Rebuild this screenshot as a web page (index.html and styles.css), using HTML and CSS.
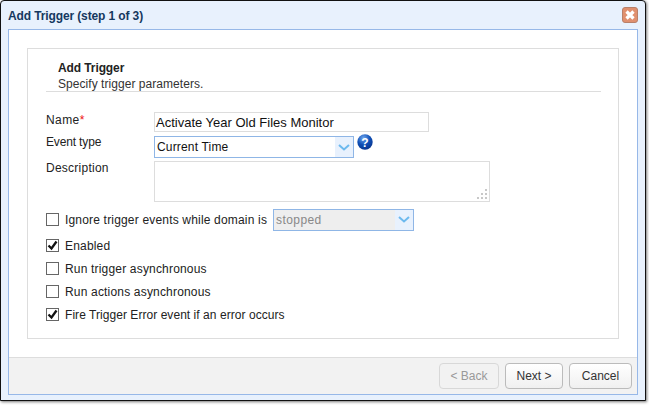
FILE: index.html
```html
<!DOCTYPE html>
<html lang="en">
<head>
<meta charset="utf-8">
<title>Add Trigger</title>
<link rel="stylesheet" href="styles.css">
</head>
<body>
<div class="window">
  <div class="titlebar">
    <span class="title">Add Trigger (step 1 of 3)</span>
    <span class="close"><svg width="12" height="12" viewBox="0 0 12 12"><path d="M2.5 2.5l7 7M9.5 2.5l-7 7" stroke="#fff" stroke-width="3.2"/></svg></span>
  </div>
  <div class="inner">
    <div class="content">
      <div class="panel">
        <div class="head">
          <div class="head-title">Add Trigger</div>
          <div class="head-sub">Specify trigger parameters.</div>
        </div>
        <div class="form-row row-name">
          <label class="label">Name<span class="req">*</span></label>
          <div class="input name-input">Activate Year Old Files Monitor</div>
        </div>
        <div class="form-row row-event">
          <label class="label">Event type</label>
          <div class="select event-select"><span class="select-text">Current Time</span><span class="arrow"><svg width="12" height="7" viewBox="0 0 12 7"><path d="M1 1l5 4.5L11 1" fill="none" stroke="#6cb9ee" stroke-width="2"/></svg></span></div>
          <svg class="help" width="16" height="16" viewBox="0 0 16 16"><defs><radialGradient id="g" cx="0.4" cy="0.25" r="0.85"><stop offset="0" stop-color="#6ea6ee"/><stop offset="0.5" stop-color="#0f4fb5"/><stop offset="1" stop-color="#062f86"/></radialGradient></defs><circle cx="8" cy="8" r="7.7" fill="url(#g)"/><text x="8" y="12.5" text-anchor="middle" class="help-q">?</text></svg>
        </div>
        <div class="form-row row-desc">
          <label class="label">Description</label>
          <div class="textarea"><svg class="grip" width="12" height="12" viewBox="0 0 12 12"><path d="M9 1h2v2H9zM5 5h2v2H5zM9 5h2v2H9zM1 9h2v2H1zM5 9h2v2H5zM9 9h2v2H9z" fill="#c8c8c8"/></svg></div>
        </div>
        <div class="check-row row-ignore">
          <span class="check"></span><span class="check-label">Ignore trigger events while domain is</span>
          <div class="select state-select"><span class="select-text">stopped</span><span class="arrow"><svg width="12" height="7" viewBox="0 0 12 7"><path d="M1 1l5 4.5L11 1" fill="none" stroke="#6cb9ee" stroke-width="2"/></svg></span></div>
        </div>
        <div class="check-row"><span class="check"><svg width="11" height="11" viewBox="0 0 11 11"><path d="M1.5 5.5l3 3 5-7" fill="none" stroke="#111" stroke-width="2.3"/></svg></span><span class="check-label">Enabled</span></div>
        <div class="check-row"><span class="check"></span><span class="check-label">Run trigger asynchronous</span></div>
        <div class="check-row"><span class="check"></span><span class="check-label">Run actions asynchronous</span></div>
        <div class="check-row"><span class="check"><svg width="11" height="11" viewBox="0 0 11 11"><path d="M1.5 5.5l3 3 5-7" fill="none" stroke="#111" stroke-width="2.3"/></svg></span><span class="check-label check-label-long">Fire Trigger Error event if an error occurs</span></div>
      </div>
    </div>
    <div class="footer">
      <button class="btn btn-back" disabled>&lt; Back</button>
      <button class="btn btn-next">Next &gt;</button>
      <button class="btn btn-cancel">Cancel</button>
    </div>
  </div>
</div>
</body>
</html>
```
FILE: styles.css
```css
* { box-sizing: border-box; }
html, body { margin: 0; padding: 0; background: #fff; }
body { width: 649px; height: 405px; overflow: hidden; font-family: "Liberation Sans", Arial, sans-serif; font-size: 12px; color: #222; }
.window { width: 646px; height: 401px; border: 1px solid #111; border-radius: 4px 4px 0 0; background: #e8f1fd; padding: 0 7px 5px 7px; box-shadow: 1px 1px 3px #777; display: flex; flex-direction: column; }
.titlebar { height: 28px; flex: none; display: flex; align-items: center; justify-content: space-between; }
.title { font-weight: bold; font-size: 12px; color: #15385f; letter-spacing: -0.12px; padding-top: 2px; }
.close { width: 16px; height: 16px; background: #e0906f; border: 1px solid #b98069; border-radius: 3px; display: flex; align-items: center; justify-content: center; }
.inner { flex: 1; border: 1px solid #97b8e8; background: #fff; display: flex; flex-direction: column; min-height: 0; }
.content { flex: 1; padding: 18px 18px 19px 18px; min-height: 0; }
.panel { height: 291px; border: 1px solid #ddd; padding: 0 18px; }
.head { margin-top: 12px; padding: 0 0 0 12px; height: 31px; border-bottom: 1px solid #ddd; width: 555px; }
.head-title { font-weight: bold; line-height: 15px; color: #222; letter-spacing: -0.1px; }
.head-sub { line-height: 16px; color: #333; letter-spacing: 0.05px; }
.form-row { display: flex; align-items: flex-start; }
.label { width: 108px; flex: none; line-height: 14px; color: #222; }
.req { color: #e11; }
.row-name { margin-top: 20px; height: 24px; }
.row-name .label { padding-top: 1px; letter-spacing: 0.4px; }
.input { width: 275px; height: 20px; border: 1px solid #ddd; font-size: 13px; line-height: 20px; padding-left: 1px; color: #111; }
.row-event { height: 25px; }
.row-event .label { margin-top: -1px; letter-spacing: -0.15px; }
.select { display: flex; border: 1px solid #8fb6e6; height: 22px; }
.select-text { flex: 1; line-height: 20px; padding-left: 2px; color: #111; }
.event-select .select-text { letter-spacing: 0.17px; }
.arrow { width: 18px; background: #e8f1fd; display: flex; align-items: center; justify-content: center; }
.event-select { width: 200px; }
.help { margin: -2px 0 0 3px; }
.help-q { font: bold 12px "Liberation Sans", sans-serif; fill: #fff; }
.row-desc { height: 41px; }
.row-desc .label { letter-spacing: 0.25px; }
.textarea { width: 336px; height: 41px; border: 1px solid #ddd; position: relative; }
.grip { position: absolute; right: 1px; bottom: 1px; }
.check-row { display: flex; align-items: center; height: 23px; }
.row-ignore { margin-top: 6px; margin-bottom: 3px; }
.check { width: 13px; height: 13px; flex: none; border: 1px solid #666; background: #fff; display: flex; align-items: center; justify-content: center; }
.check-label { margin-left: 6px; color: #222; letter-spacing: 0.18px; }
.check-label-long { letter-spacing: 0.05px; }
.state-select { width: 141px; margin-left: 6px; background: #eee; }
.state-select .select-text { color: #888; letter-spacing: 0.4px; }
.footer { height: 37px; flex: none; background: #f2f2f2; border-top: 1px solid #ddd; display: flex; justify-content: flex-end; align-items: flex-start; gap: 6px; padding: 5px 5px 0 0; }
.btn { height: 26px; border: 1px solid #bbb; border-radius: 4px; background: linear-gradient(#fff, #f0f0f0); font: 12px "Liberation Sans", sans-serif; color: #333; padding: 0; }
.btn-back { width: 60px; color: #999; border-color: #d8d8d8; background: #f2f2f2; }
.btn-next { width: 58px; }
.btn-cancel { width: 63px; }
```
